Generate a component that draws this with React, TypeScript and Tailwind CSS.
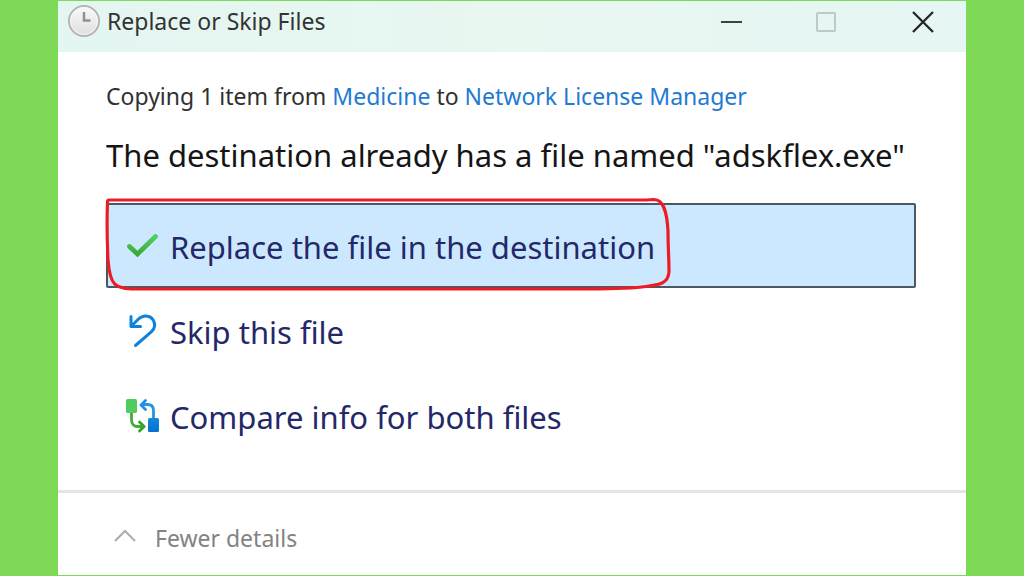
import type { ReactNode } from "react";

function ClockIcon() {
  return (
    <svg className="size-8 shrink-0" viewBox="0 0 32 32" fill="none" aria-hidden="true">
      <defs>
        <linearGradient id="clock-face" x1="0" y1="0" x2="0" y2="1">
          <stop offset="0" stopColor="#fafafa" />
          <stop offset="1" stopColor="#dedede" />
        </linearGradient>
      </defs>
      <circle cx="16" cy="16" r="15" fill="url(#clock-face)" stroke="#b5b5b5" strokeWidth="2" />
      <circle cx="16" cy="16" r="13.5" stroke="#f7f7f7" />
      <path d="M16 7v8.500h6.500" stroke="#909090" strokeWidth="2.500" />
    </svg>
  );
}

function CheckIcon() {
  return (
    <svg className="size-9 shrink-0" viewBox="0 0 36 36" fill="none" aria-hidden="true">
      <defs>
        <linearGradient id="check" x1="0" y1="8" x2="0" y2="28" gradientUnits="userSpaceOnUse">
          <stop offset="0" stopColor="#4fd160" />
          <stop offset="1" stopColor="#36a52c" />
        </linearGradient>
      </defs>
      <path d="M4.500 17.500 12.500 25 30.500 7.500" stroke="url(#check)" strokeWidth="4.800" strokeLinecap="round" />
    </svg>
  );
}

function UndoIcon() {
  return (
    <svg className="size-9 shrink-0" viewBox="0 0 36 36" fill="none" aria-hidden="true">
      <path
        d="M6 2.500v10h9.500M6.500 12l7-7C18 .5 25 1 28.200 6c2.300 4 1.500 8.500-1.700 11.700L10.500 31.500"
        stroke="#0f83db"
        strokeWidth="3"
        strokeLinecap="round"
        strokeLinejoin="round"
      />
    </svg>
  );
}

function CompareIcon() {
  return (
    <svg className="size-9 shrink-0" viewBox="0 0 36 36" fill="none" aria-hidden="true">
      <defs>
        <linearGradient id="green-file" x1="0" y1="0" x2="1" y2="1">
          <stop offset="0" stopColor="#46d05c" />
          <stop offset="1" stopColor="#5bc862" />
        </linearGradient>
        <linearGradient id="blue-file" x1="0" y1="0" x2="0" y2="1">
          <stop offset="0" stopColor="#1687df" />
          <stop offset="1" stopColor="#0072cc" />
        </linearGradient>
      </defs>
      <path d="M6.500 14v7c0 4 2.500 6.500 6 6.500h6" stroke="#43ab38" strokeWidth="2.800" />
      <path d="m14.500 23 4.700 4.500-4.700 4.500" stroke="#38a326" strokeWidth="2.800" strokeLinecap="round" strokeLinejoin="round" />
      <path d="M28.500 19v-7.500c0-4-2.500-6-6-6h-6" stroke="#2b93dc" strokeWidth="2.800" />
      <path d="M20.500 1.500 16 6l4.500 4.500" stroke="#1b91e5" strokeWidth="2.800" strokeLinecap="round" strokeLinejoin="round" />
      <rect x="1" y="0" width="11" height="14" rx="1.500" fill="url(#green-file)" />
      <rect x="23" y="19" width="11" height="14" rx="1.500" fill="url(#blue-file)" />
    </svg>
  );
}

function Marker() {
  return (
    <svg
      className="pointer-events-none absolute -top-2 -left-1 h-24 w-[572px]"
      viewBox="0 0 572 96"
      fill="none"
      aria-hidden="true"
    >
      <path
        d="M7 5H544L552 4.500C562 4.500 565 18 566 36c0 15 1 29 1 41c-1 13-12 13-27 15C527 93.500 509 94 475 94H29C14 93 8 91 6 65C5 44 5 20 5.500 7Q5.500 5 7 5Z"
        stroke="#ed1c24"
        strokeWidth="3.200"
        strokeLinejoin="round"
      />
    </svg>
  );
}

function Choice({ icon, label, selected = false }: { icon: ReactNode; label: string; selected?: boolean }) {
  return (
    <button
      type="button"
      className={
        selected
          ? "flex h-[85px] w-full items-center gap-[9px] rounded-xs border-2 border-[#4b5864] bg-[#cce8ff] px-[17px] pt-0.5 text-left"
          : "flex h-[85px] w-full items-center gap-[9px] rounded-xs border-2 border-transparent px-[17px] pt-0.5 text-left"
      }
    >
      {icon}
      <span className="whitespace-nowrap text-[31px] leading-10 text-[#242868]">{label}</span>
    </button>
  );
}

export default function App() {
  return (
    <main className="flex min-h-screen bg-[#7ed957] px-[58px] py-px font-['Noto_Sans',sans-serif]">
      <section className="flex min-w-0 flex-1 flex-col bg-white" aria-label="Replace or Skip Files">
        <header className="flex h-[51px] items-start justify-between bg-gradient-to-r from-[#e4f6f2] via-[#e8f7f0] to-[#e6f6f4] pr-[31px] pl-[10px]">
          <div className="flex items-center gap-[7px] pt-1">
            <ClockIcon />
            <h1 className="whitespace-nowrap text-[23px] leading-8 text-[#333]">Replace or Skip Files</h1>
          </div>
          <div className="flex gap-[72px] pt-2">
            <button type="button" aria-label="Minimize">
              <svg className="size-6" viewBox="0 0 24 24" fill="none" stroke="#404242" strokeWidth="2">
                <path d="M2 13h21" />
              </svg>
            </button>
            <button type="button" aria-label="Maximize" disabled>
              <svg className="size-6" viewBox="0 0 24 24" fill="none" stroke="#bdcac6" strokeWidth="2">
                <rect x="2" y="4" width="18" height="18" rx="1" />
              </svg>
            </button>
            <button type="button" aria-label="Close">
              <svg className="size-6" viewBox="0 0 24 24" fill="none" stroke="#242626" strokeWidth="2.300">
                <path d="m2 3 20 20M22 3 2 23" />
              </svg>
            </button>
          </div>
        </header>

        <div className="flex-1 pt-7 pr-[50px] pb-8 pl-12">
          <p className="whitespace-nowrap text-[23px] leading-8 text-[#303030]">
            Copying 1 item from <a href="#medicine" className="text-[#1f7ad4]">Medicine</a> to{" "}
            <a href="#manager" className="text-[#1f7ad4]">Network License Manager</a>
          </p>
          <h2 className="mt-[19px] whitespace-nowrap text-[31px] leading-12 text-[#151515]">
            The destination already has a file named "adskflex.exe"
          </h2>
          <div className="relative mt-6">
            <Choice selected icon={<CheckIcon />} label="Replace the file in the destination" />
            <Choice icon={<UndoIcon />} label="Skip this file" />
            <Choice icon={<CompareIcon />} label="Compare info for both files" />
            <Marker />
          </div>
        </div>

        <footer className="flex h-[85px] items-center border-t-[3px] border-[#e5e5e5] px-[55px] pt-2">
          <button type="button" className="flex items-center gap-[18px] text-[23px] leading-8 text-[#838383]">
            <svg className="size-6" viewBox="0 0 24 24" fill="none" stroke="#acacac" strokeWidth="2" aria-hidden="true">
              <path d="m2 15 10-10 10 10" />
            </svg>
            Fewer details
          </button>
        </footer>
      </section>
    </main>
  );
}
